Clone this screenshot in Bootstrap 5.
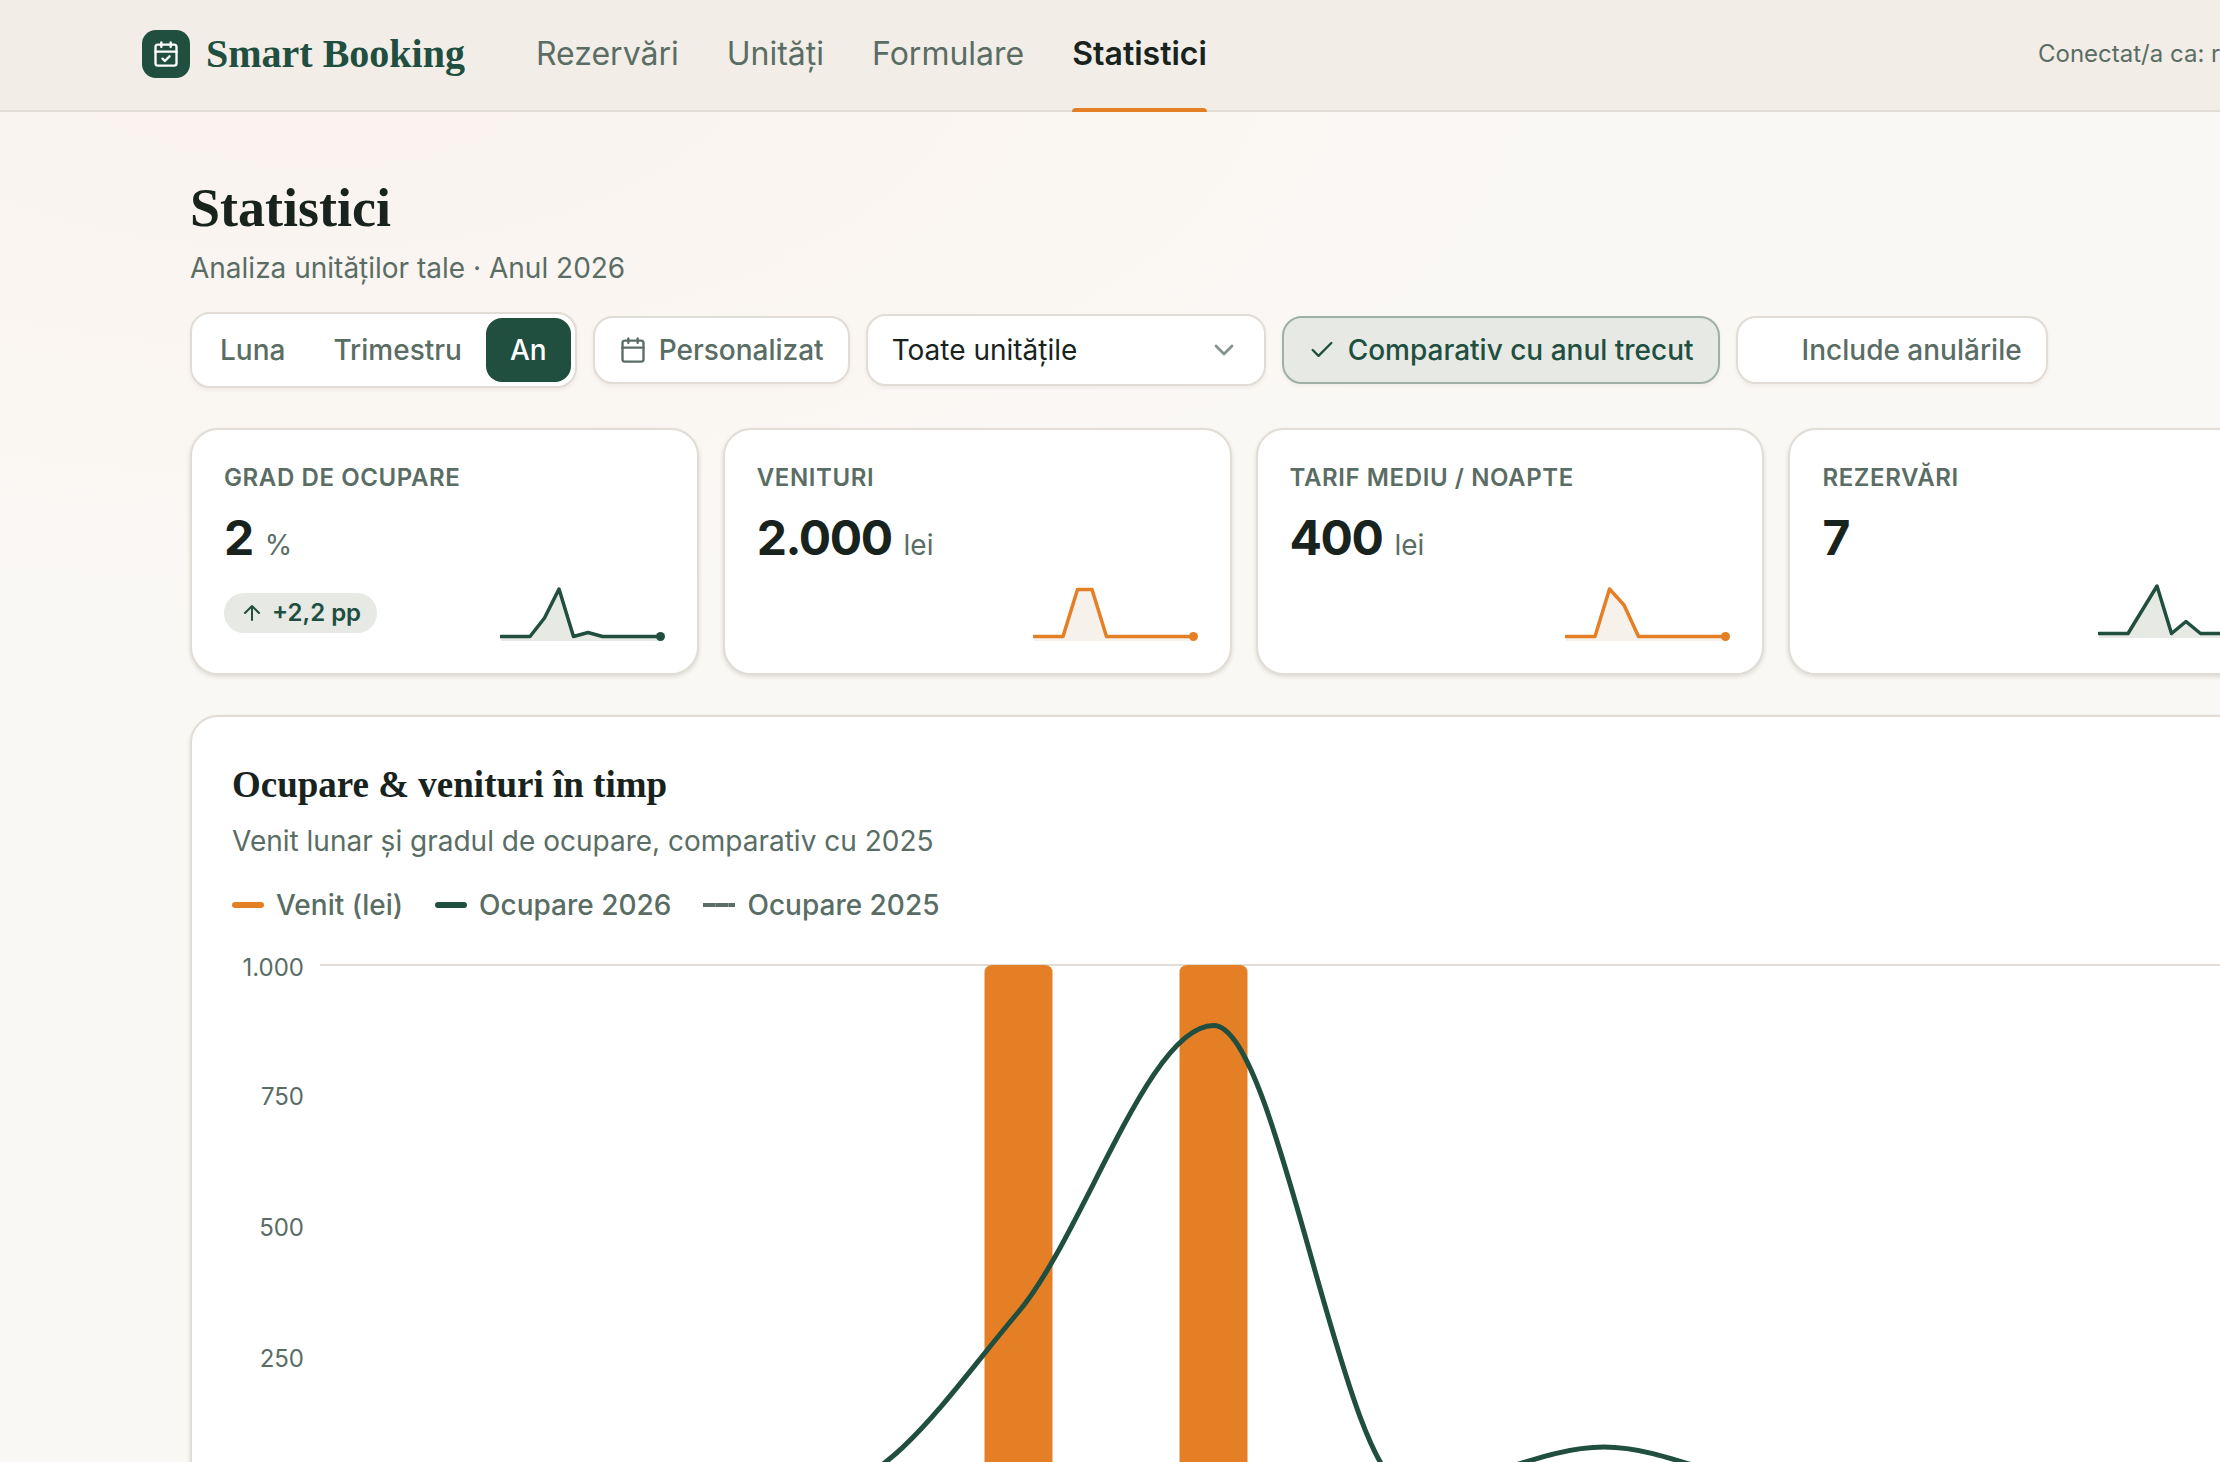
<!DOCTYPE html>
<html lang="ro">
<head>
<meta charset="utf-8">
<meta name="viewport" content="width=device-width, initial-scale=1">
<title>Smart Booking – Statistici</title>
<link href="https://cdn.jsdelivr.net/npm/bootstrap@5.3.0/dist/css/bootstrap.min.css" rel="stylesheet">
<style>
:root{--green:#204e3f;--orange:#e57f25;--ink:#18231e;--muted:#5a6d65;--line:#e1dcd5;--tint:#e6e9e4}
body{font-family:Inter,"Liberation Sans",sans-serif;font-size:28px;line-height:40px;color:var(--ink);background:#faf8f5;overflow:hidden}
.shell{min-width:3020px;height:100vh;overflow:hidden;background:radial-gradient(ellipse 1300px 560px at 300px 60px,#faf3ef,rgba(250,243,239,0) 100%)}
.serif{font-family:"Liberation Serif",serif;font-weight:700}
svg{display:block;flex:none}
.ic{fill:none;stroke:currentColor;stroke-width:2;stroke-linecap:round;stroke-linejoin:round}
.topbar{height:112px;padding:0 142px 2px;background:#f2ede6;border-bottom:2px solid var(--line)}
.logo-tile{width:48px;height:48px;border-radius:14px;background:var(--green);color:#fff}
.brand-name{font-size:40px;line-height:48px;color:var(--green)}
.brand-link{margin-right:71px}
.menu{gap:48px;font-size:32px}
.menu a{color:var(--muted);text-decoration:none;position:relative}
.menu a.current{color:var(--ink);font-weight:600}
.menu a.current::after{content:"";position:absolute;left:0;right:0;bottom:-4px;height:4px;border-radius:4px 4px 0 0;background:var(--orange)}
.user-box{width:840px;font-size:24px;color:var(--muted)}
main{padding:64px 190px 0}
h1{font-size:54px;line-height:64px;margin-bottom:8px}
.muted-text{color:var(--muted)}
.controls{gap:16px;margin:24px 0 40px}
.panel{background:#fff;border:2px solid var(--line);box-shadow:0 2px 4px rgba(60,30,10,.06)}
.segments{border-radius:20px;padding:4px}
.segments button{border:0;background:none;height:64px;padding:0 24px;border-radius:16px;font-weight:500;color:var(--muted)}
.segments button.picked{background:var(--green);color:#fff}
.chip{height:68px;border-radius:20px;padding:0 24px;gap:12px;font-weight:500;color:var(--muted)}
.chip.picked{background:var(--tint);border-color:#9fb0a8;color:var(--green)}
.unit-pick{width:400px}
.unit-pick select{appearance:none;width:100%;height:72px;border-radius:20px;padding:0 24px;color:var(--ink)}
.unit-pick svg{position:absolute;right:26px;top:20px;color:#84928c;pointer-events:none}
.kpis{display:grid;grid-template-columns:repeat(5,1fr);gap:24px;margin-bottom:40px}
.kpi{border-radius:28px;padding:32px;box-shadow:0 2px 4px rgba(40,40,20,.14)}
.kpi h2{font-size:24px;line-height:32px;font-weight:600;letter-spacing:.025em;text-transform:uppercase;color:var(--muted);margin-bottom:20px}
.kpi p{font-size:48px;line-height:48px;font-weight:700;letter-spacing:-.03em;margin-bottom:20px}
.kpi p span{font-size:28px;line-height:40px;font-weight:400;letter-spacing:normal;color:var(--muted);margin-left:12px}
.trend{height:40px;border-radius:20px;padding:0 16px;gap:8px;background:var(--tint);color:var(--green);font-size:24px;font-weight:600}
.spark path{fill:none;stroke-width:3.5;stroke-linejoin:round;stroke-linecap:round}
.spark .area{stroke:none}
.sp-green path{stroke:var(--green)}.sp-green .area{fill:#e6e9e4}.sp-green circle{fill:var(--green)}
.sp-orange path{stroke:var(--orange)}.sp-orange .area{fill:#f7f1ec}.sp-orange circle{fill:var(--orange)}
.chart-panel{border-radius:28px;padding:40px;box-shadow:0 2px 4px rgba(40,40,20,.14)}
.chart-panel h2{font-size:37px;line-height:56px;margin-bottom:8px}
.legend-row{gap:32px;margin:24px 0;font-weight:500;color:var(--muted)}
.legend-row li{display:flex;align-items:center;gap:12px}
.swatch{width:32px;height:6px;border-radius:3px}
.chart text{font-size:24px;fill:var(--muted);text-anchor:end}
</style>
<script src="https://cdn.jsdelivr.net/npm/bootstrap@5.3.0/dist/js/bootstrap.bundle.min.js"></script>
</head>
<body>
<div class="shell">
<header class="topbar d-flex align-items-stretch">
  <a class="brand-link d-flex align-items-center gap-3 text-decoration-none" href="#">
    <span class="logo-tile d-flex align-items-center justify-content-center">
      <svg class="ic" width="28" height="28" viewBox="0 0 24 24"><path d="M8 2v4M16 2v4M3 10h18M9 16l2 2 4-4"/><rect x="3" y="4" width="18" height="18" rx="2"/></svg>
    </span>
    <span class="serif brand-name">Smart Booking</span>
  </a>
  <nav class="menu d-flex">
    <a class="d-flex align-items-center" href="#">Rezervări</a>
    <a class="d-flex align-items-center" href="#">Unități</a>
    <a class="d-flex align-items-center" href="#">Formulare</a>
    <a class="d-flex align-items-center current" href="#" aria-current="page">Statistici</a>
  </nav>
  <div class="user-box d-flex align-items-center ms-auto">Conectat/a ca: r</div>
</header>
<main>
  <h1 class="serif">Statistici</h1>
  <p class="muted-text mb-0">Analiza unităților tale · Anul 2026</p>
  <div class="controls d-flex align-items-center">
    <div class="segments panel d-flex" role="group">
      <button type="button">Luna</button>
      <button type="button">Trimestru</button>
      <button type="button" class="picked">An</button>
    </div>
    <button type="button" class="chip panel d-flex align-items-center">
      <svg class="ic" width="28" height="28" viewBox="0 0 24 24"><path d="M8 2v4M16 2v4M3 10h18"/><rect x="3" y="4" width="18" height="18" rx="2"/></svg>
      Personalizat
    </button>
    <label class="unit-pick position-relative">
      <select class="panel" aria-label="Unitate"><option>Toate unitățile</option></select>
      <svg class="ic" width="32" height="32" viewBox="0 0 24 24"><path d="M6 9l6 6 6-6"/></svg>
    </label>
    <button type="button" class="chip panel picked d-flex align-items-center" aria-pressed="true">
      <svg class="ic" width="28" height="28" viewBox="0 0 24 24"><path d="M20 6L9 17l-5-5"/></svg>
      Comparativ cu anul trecut
    </button>
    <button type="button" class="chip panel d-flex align-items-center" aria-pressed="false">
      <svg class="ic invisible" width="28" height="28" viewBox="0 0 24 24"><path d="M20 6L9 17l-5-5"/></svg>
      Include anulările
    </button>
  </div>

  <section class="kpis">
    <article class="kpi panel">
      <h2>Grad de ocupare</h2>
      <p>2<span>%</span></p>
      <div class="d-flex align-items-center justify-content-between">
        <div class="trend d-flex align-items-center">
          <svg class="ic" width="24" height="24" viewBox="0 0 24 24"><path d="M12 19V5M5 12l7-7 7 7"/></svg>
          +2,2 pp
        </div>
        <svg class="spark sp-green" width="165" height="56"><path class="area" d="M1 56V51.500H30L44.500 33 59 4 73.500 51.500 88 47.500 102.500 51.500H160.500V56Z"/><path d="M1 51.500H30L44.500 33 59 4 73.500 51.500 88 47.500 102.500 51.500H160.500"/><circle cx="160.500" cy="51.500" r="4.500"/></svg>
      </div>
    </article>
    <article class="kpi panel">
      <h2>Venituri</h2>
      <p>2.000<span>lei</span></p>
      <div class="d-flex justify-content-end">
        <svg class="spark sp-orange" width="165" height="56"><path class="area" d="M1 56V51.500H30L44.500 4.500H59L73.500 51.500H160.500V56Z"/><path d="M1 51.500H30L44.500 4.500H59L73.500 51.500H160.500"/><circle cx="160.500" cy="51.500" r="4.500"/></svg>
      </div>
    </article>
    <article class="kpi panel">
      <h2>Tarif mediu / noapte</h2>
      <p>400<span>lei</span></p>
      <div class="d-flex justify-content-end">
        <svg class="spark sp-orange" width="165" height="56"><path class="area" d="M1 56V51.500H30L44.500 4 59 20 73.500 51.500H160.500V56Z"/><path d="M1 51.500H30L44.500 4 59 20 73.500 51.500H160.500"/><circle cx="160.500" cy="51.500" r="4.500"/></svg>
      </div>
    </article>
    <article class="kpi panel">
      <h2>Rezervări</h2>
      <p>7</p>
      <div class="d-flex justify-content-end">
        <svg class="spark sp-green" width="165" height="56"><path class="area" d="M1 56V51.500H30L59 4 73.500 51.500 88 39.500 102.500 51.500H160.500V56Z"/><path d="M1 51.500H30L59 4 73.500 51.500 88 39.500 102.500 51.500H160.500"/><circle cx="160.500" cy="51.500" r="4.500"/></svg>
      </div>
    </article>
  </section>

  <section class="chart-panel panel">
    <h2 class="serif">Ocupare &amp; venituri în timp</h2>
    <p class="muted-text mb-0">Venit lunar și gradul de ocupare, comparativ cu 2025</p>
    <ul class="legend-row d-flex list-unstyled">
      <li><span class="swatch" style="background:#e57f25"></span>Venit (lei)</li>
      <li><span class="swatch" style="background:#204e3f"></span>Ocupare 2026</li>
      <li><svg width="32" height="6"><path d="M0 3H32" stroke="#84928c" stroke-width="4"/><path d="M0 3H12M13 3H25M26 3H32" stroke="#5a6d65" stroke-width="4"/></svg>Ocupare 2025</li>
    </ul>
    <svg class="chart" width="100%" height="620">
      <path d="M88 16H2532" stroke="#e1dcd5" stroke-width="2"/>
      <text x="72" y="27">1.000</text>
      <text x="72" y="156">750</text>
      <text x="72" y="287">500</text>
      <text x="72" y="418">250</text>
      <g fill="#e57f25">
        <path d="M752.500 540V24q0-8 8-8h52q8 0 8 8V540Z"/>
        <path d="M947.500 540V24q0-8 8-8h52q8 0 8 8V540Z"/>
      </g>
      <path fill="none" stroke="#204e3f" stroke-width="5" d="M201 540H591C656 540 721 440.200 786.400 363C851.500 285.800 916.500 76.500 981.600 76.500C1046.700 76.500 1111.700 540 1176.800 540C1241.900 540 1306.900 498 1372 498C1437 498 1502 540 1567 540H2348"/>
    </svg>
  </section>
</main>
</div>
</body>
</html>
